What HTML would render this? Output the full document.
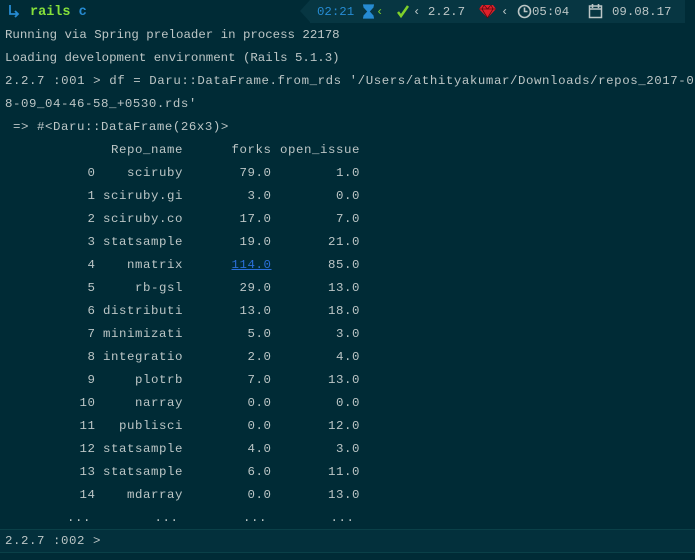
<!DOCTYPE html>
<html><head><meta charset="utf-8"><style>
html,body{margin:0;padding:0;background:#002b36;width:695px;height:560px;overflow:hidden}
.ln{position:absolute;left:5px;font-family:"Liberation Mono","DejaVu Sans Mono",monospace;font-size:12.4px;line-height:23px;color:#bcc6c6;white-space:pre}
.w{letter-spacing:0.56px}
.row{position:absolute;left:5px;font-family:"Liberation Mono","DejaVu Sans Mono",monospace;font-size:12.4px;line-height:23px;color:#bcc6c6;white-space:pre;letter-spacing:0.56px;display:flex}
.row span{display:inline-block;text-align:right}
.c1{width:90.5px}.c2{width:87.5px}.c3{width:88.5px}.c4{width:88.5px}
.bar{position:absolute;left:310px;top:0;width:375px;height:23px;background:#073642}
.tri{position:absolute;left:300px;top:0;width:0;height:0;border-top:11.5px solid transparent;border-bottom:11.5px solid transparent;border-right:10px solid #073642}
.bot{position:absolute;left:0;top:529px;width:695px;height:22px;background:#03303c;border-top:1px solid #0a4048;border-bottom:1px solid #0a4048}
.b{color:#268bd2}.g{color:#85e03a;font-weight:bold}.gr{color:#7fd12a}
a{color:#2a6fd8;text-decoration:underline}
.top{position:absolute;top:1px;font-family:"Liberation Mono","DejaVu Sans Mono",monospace;font-size:12.4px;line-height:23px;color:#bcc6c6;white-space:pre}
</style></head><body>
<div class="bar"></div><div class="tri"></div>
<div class="bot"></div>
<svg style="position:absolute;left:8px;top:4px" width="12" height="14" viewBox="0 0 12 14"><path d="M2 1v9h8M7 7l3 3-3 3" fill="none" stroke="#268bd2" stroke-width="1.8"/></svg>
<div class="top" style="left:30px;font-size:13.5px"><span class="g">rails</span> <span class="b" style="font-weight:bold">c</span></div>
<div class="top" style="left:317px"><span class="b">02:21</span></div>
<svg style="position:absolute;left:362px;top:4px" width="14" height="15" viewBox="0 0 14 15"><path d="M1 1h11M1 14h11M2 1v2l4 4.5-4 4.5v2h9v-2l-4-4.5 4-4.5V1" fill="#268bd2" stroke="#268bd2" stroke-width="1.3"/></svg>
<div class="top" style="left:376px"><span class="gr">‹</span></div>
<svg style="position:absolute;left:396px;top:5px" width="14" height="13" viewBox="0 0 14 13"><path d="M2 7l3 4 7-10" fill="none" stroke="#7fd12a" stroke-width="2.5"/></svg>
<div class="top" style="left:413px">‹ 2.2.7</div>
<svg style="position:absolute;left:478px;top:4px" width="19" height="15" viewBox="0 0 19 15"><path d="M4 1h11l3 4-8.5 9L1 5z" fill="#e0202a"/><path d="M1 5h17M6 1l-2 4 5.5 9M13 1l2 4-5.5 9M6 1l3.5 4 3.5-4" fill="none" stroke="#5a0a10" stroke-width="0.8"/></svg>
<div class="top" style="left:501px">‹</div>
<svg style="position:absolute;left:517px;top:4px" width="15" height="15" viewBox="0 0 15 15"><circle cx="7.5" cy="7.5" r="6" fill="none" stroke="#bcc6c6" stroke-width="1.6"/><path d="M7.5 3.5v4h3" fill="none" stroke="#bcc6c6" stroke-width="1.6"/></svg>
<div class="top" style="left:532px">05:04</div>
<svg style="position:absolute;left:588px;top:3px" width="15" height="16" viewBox="0 0 15 16"><rect x="1.5" y="3" width="12" height="11.5" fill="none" stroke="#bcc6c6" stroke-width="1.5"/><path d="M1.5 6h12M4.5 1v4M10.5 1v4" stroke="#bcc6c6" stroke-width="1.6"/></svg>
<div class="top" style="left:612px">09.08.17</div>

<div class="ln" style="top:24px">Running via Spring preloader in process 22178</div>
<div class="ln" style="top:47px">Loading development environment (Rails 5.1.3)</div>
<div class="ln w" style="top:70px;letter-spacing:0.58px">2.2.7 :001 &gt; df = Daru::DataFrame.from_rds '/Users/athityakumar/Downloads/repos_2017-0</div>
<div class="ln w" style="top:93px">8-09_04-46-58_+0530.rds'</div>
<div class="ln w" style="top:116px"> =&gt; #&lt;Daru::DataFrame(26x3)&gt;</div>

<div class="row" style="top:139px"><span class="c1"></span><span class="c2">Repo_name</span><span class="c3">forks</span><span class="c4">open_issue</span></div>
<div class="row" style="top:162px"><span class="c1">0</span><span class="c2">sciruby</span><span class="c3">79.0</span><span class="c4">1.0</span></div>
<div class="row" style="top:185px"><span class="c1">1</span><span class="c2">sciruby.gi</span><span class="c3">3.0</span><span class="c4">0.0</span></div>
<div class="row" style="top:208px"><span class="c1">2</span><span class="c2">sciruby.co</span><span class="c3">17.0</span><span class="c4">7.0</span></div>
<div class="row" style="top:231px"><span class="c1">3</span><span class="c2">statsample</span><span class="c3">19.0</span><span class="c4">21.0</span></div>
<div class="row" style="top:254px"><span class="c1">4</span><span class="c2">nmatrix</span><span class="c3"><a>114.0</a></span><span class="c4">85.0</span></div>
<div class="row" style="top:277px"><span class="c1">5</span><span class="c2">rb-gsl</span><span class="c3">29.0</span><span class="c4">13.0</span></div>
<div class="row" style="top:300px"><span class="c1">6</span><span class="c2">distributi</span><span class="c3">13.0</span><span class="c4">18.0</span></div>
<div class="row" style="top:323px"><span class="c1">7</span><span class="c2">minimizati</span><span class="c3">5.0</span><span class="c4">3.0</span></div>
<div class="row" style="top:346px"><span class="c1">8</span><span class="c2">integratio</span><span class="c3">2.0</span><span class="c4">4.0</span></div>
<div class="row" style="top:369px"><span class="c1">9</span><span class="c2">plotrb</span><span class="c3">7.0</span><span class="c4">13.0</span></div>
<div class="row" style="top:392px"><span class="c1">10</span><span class="c2">narray</span><span class="c3">0.0</span><span class="c4">0.0</span></div>
<div class="row" style="top:415px"><span class="c1">11</span><span class="c2">publisci</span><span class="c3">0.0</span><span class="c4">12.0</span></div>
<div class="row" style="top:438px"><span class="c1">12</span><span class="c2">statsample</span><span class="c3">4.0</span><span class="c4">3.0</span></div>
<div class="row" style="top:461px"><span class="c1">13</span><span class="c2">statsample</span><span class="c3">6.0</span><span class="c4">11.0</span></div>
<div class="row" style="top:484px"><span class="c1">14</span><span class="c2">mdarray</span><span class="c3">0.0</span><span class="c4">13.0</span></div>
<div class="row" style="top:507px"><span class="c1" style="width:86px">...</span><span class="c2">...</span><span class="c3">...</span><span class="c4" style="width:87.5px">...</span></div>
<div class="ln w" style="top:530px">2.2.7 :002 &gt;</div>
</body></html>
